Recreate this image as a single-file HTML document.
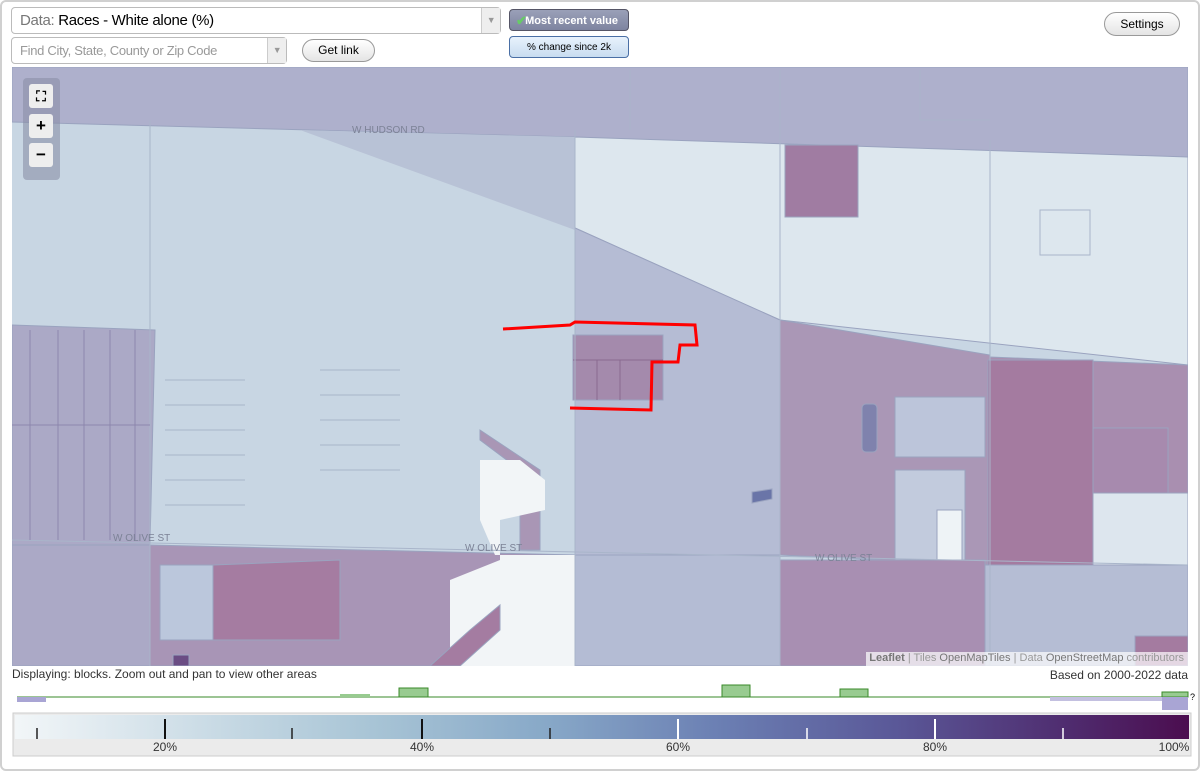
<!DOCTYPE html>
<html><head><style>
body{margin:0;width:1200px;height:771px;background:#fff;font-family:"Liberation Sans",sans-serif;position:relative;overflow:hidden}
.frame{position:absolute;left:0;top:0;width:1196px;height:767px;border:2px solid #d0d0d0;border-radius:6px}
.sel{position:absolute;background:#fff;border:1px solid #bbb;border-radius:4px;box-sizing:border-box}
.arrow{position:absolute;right:0;top:0;bottom:0;width:18px;border-left:1px solid #ccc;background:#eee;color:#999;font-size:9px;text-align:center}
.btn{position:absolute;border:1px solid #999;border-radius:12px;background:linear-gradient(#fff,#e4e4e4);font-size:12px;text-align:center;box-sizing:border-box}
.zb{position:absolute;left:29px;width:24px;height:24px;background:#eee;border-radius:3px;font-weight:bold;text-align:center;font-size:17px;line-height:24px}
</style></head><body>
<div class="frame"></div>
<div class="sel" style="left:11px;top:7px;width:490px;height:27px;font-size:15px;line-height:25px;padding-left:8px;letter-spacing:-0.3px"><span style="color:#777">Data:</span> Races - White alone (%)<div class="arrow" style="line-height:25px">▼</div></div>
<div class="sel" style="left:11px;top:37px;width:276px;height:27px;font-size:13px;line-height:25px;padding-left:8px;color:#999;letter-spacing:-0.3px">Find City, State, County or Zip Code<div class="arrow" style="line-height:25px">▼</div></div>
<div class="btn" style="left:302px;top:39px;width:73px;height:23px;line-height:21px">Get link</div>
<div style="position:absolute;left:509px;top:9px;width:120px;height:22px;border:1px solid #556;border-radius:4px;background:linear-gradient(#9aa0b8,#7e84a0);color:#fff;font-size:11px;font-weight:bold;line-height:22px;text-align:right;padding-right:10px;box-sizing:border-box"><span style="color:#6c6;position:absolute;left:6px;font-size:13px">✔</span>Most recent value</div>
<div style="position:absolute;left:509px;top:36px;width:120px;height:22px;border:1px solid #4a6fa5;border-radius:4px;background:linear-gradient(#e8f2fc,#c8dcf0);font-size:10px;line-height:22px;text-align:center;box-sizing:border-box">% change since 2k</div>
<div class="btn" style="left:1104px;top:12px;width:76px;height:24px;line-height:22px">Settings</div>

<svg style="position:absolute;left:0;top:0" width="1200" height="771">
<defs><clipPath id="m"><rect x="12" y="67" width="1176" height="599"/></clipPath>
<linearGradient id="g" x1="0" x2="1"><stop offset="0" stop-color="#f2f6f8"/><stop offset=".3" stop-color="#a9c5d6"/><stop offset=".45" stop-color="#88a9c8"/><stop offset=".6" stop-color="#6b7fb3"/><stop offset=".75" stop-color="#5a5898"/><stop offset=".9" stop-color="#4f2b6e"/><stop offset="1" stop-color="#4b0d4f"/></linearGradient></defs>
<g clip-path="url(#m)" stroke="#9aa3bf" stroke-width="1">
<rect x="12" y="67" width="1176" height="599" fill="#c8d6e3" stroke="none"/>
<polygon points="12,67 1188,67 1188,158 990,155 575,137 12,122" fill="#aeb0cc"/>
<polygon points="300,130 575,137 575,230" fill="#b8c2d6" stroke="none"/>
<polygon points="575,137 1188,157 1188,365 780,320 575,228" fill="#dde7ee"/>
<polygon points="575,228 780,320 780,555 575,555" fill="#b5bcd4"/>
<polygon points="780,320 990,355 990,565 780,555" fill="#aa97b6"/>
<polygon points="990,357 1188,365 1188,565 990,565" fill="#a98fb0"/>
<rect x="988" y="360" width="105" height="205" fill="#a47ba0"/>
<rect x="1093" y="428" width="75" height="65" fill="#a78aae"/>
<rect x="1093" y="493" width="95" height="72" fill="#dde6ee"/>
<rect x="895" y="397" width="90" height="60" fill="#bcc5da"/>
<rect x="895" y="470" width="70" height="90" fill="#c2cbdd"/>
<rect x="937" y="510" width="25" height="50" fill="#eef3f6"/>
<rect x="862" y="404" width="15" height="48" rx="4" fill="#7f82ad"/>
<path d="M752,492 l20,-3 v10 l-20,4z" fill="#6a75a8"/>
<rect x="785" y="145" width="73" height="72" fill="#a07ca2"/>
<polygon points="12,325 155,330 150,545 12,545" fill="#aba9c6"/>
<polygon points="12,545 150,545 150,666 12,666" fill="#aba9c6"/>
<polygon points="150,545 575,555 575,666 150,666" fill="#a895b6"/>
<polygon points="213,565 340,560 340,640 213,640" fill="#a57ca1"/>
<rect x="160" y="565" width="53" height="75" fill="#bbc7dc"/>
<polygon points="480,430 540,470 540,550 520,550 520,470 480,440" fill="#a996b5"/>
<polygon points="480,460 520,460 545,480 545,510 500,520 500,560 450,580 450,666 575,666 575,555 495,555 480,520" fill="#f2f5f7" stroke="none"/>
<polygon points="470,630 500,605 500,630 460,666 430,666" fill="#a47ca1"/>
<rect x="575" y="555" width="205" height="111" fill="#b4bcd4"/>
<rect x="780" y="560" width="205" height="106" fill="#a88fb2"/>
<rect x="985" y="565" width="203" height="101" fill="#b5bdd4"/>
<rect x="1135" y="636" width="53" height="30" fill="#a47ba0"/>
<rect x="573" y="335" width="90" height="65" fill="#a48aac"/>
<path d="M573,360 H663 M597,360 V400 M620,360 V400" stroke="#8a6a90" fill="none"/>
<rect x="173" y="655" width="16" height="11" fill="#6b4d84"/>
<g fill="none" stroke="#a9b5ca">
<path d="M150,120 V666 M575,130 V666 M780,70 V666 M990,140 V666 M12,540 L1188,565"/>
<path d="M165,380 H245 M165,405 H245 M165,430 H245 M165,455 H245 M165,480 H245 M165,505 H245 M320,370 H400 M320,395 H400 M320,420 H400 M320,445 H400 M320,470 H400"/>
<path d="M1040,210 H1090 V255 H1040Z M920,70 V120 H990 M630,70 V130"/>
</g>
<path d="M30,330 V540 M58,330 V540 M84,330 V540 M110,330 V540 M135,330 V540 M12,425 H150" stroke="#8d86ad" fill="none"/>
<path d="M503,329 L570,325 L575,322 L695,325 L697,345 L680,345 L678,362 L652,362 L651,410 L570,408" fill="none" stroke="#f00" stroke-width="3"/>
<rect x="23" y="78" width="37" height="102" rx="4" fill="#8a90a6" opacity=".6" stroke="none"/>
</g>
<g font-size="10" fill="#7c8296" font-family="Liberation Sans">
<text x="352" y="133">W HUDSON RD</text><text x="465" y="551">W OLIVE ST</text><text x="815" y="561">W OLIVE ST</text><text x="113" y="541">W OLIVE ST</text>
</g>
<path d="M17,697 H1162" stroke="#3a8a2a" stroke-width="1"/>
<rect x="17" y="697" width="29" height="5" fill="#a9a5d4"/>
<rect x="399" y="688" width="29" height="9" fill="#98cb90" stroke="#3a8a2a"/>
<rect x="722" y="685" width="28" height="12" fill="#98cb90" stroke="#3a8a2a"/>
<rect x="840" y="689" width="28" height="8" fill="#98cb90" stroke="#3a8a2a"/>
<rect x="340" y="694" width="30" height="3" fill="#98cb90"/>
<rect x="1162" y="692" width="26" height="5" fill="#98cb90" stroke="#3a8a2a"/>
<rect x="1162" y="697" width="26" height="13" fill="#a9a5d4"/>
<rect x="1050" y="697" width="112" height="4" fill="#c3c0e0"/>
<text x="1190" y="700" font-size="9">?</text>
<rect x="13" y="713" width="1178" height="43" fill="#ebebeb" stroke="#ccc"/>
<rect x="15" y="715" width="1174" height="24" fill="url(#g)"/>
<g stroke-width="1.5"><path d="M37,728 V739 M292,728 V739 M550,728 V739" stroke="#222"/><path d="M165,719 V739 M422,719 V739" stroke="#111" stroke-width="2"/><path d="M678,719 V739 M935,719 V739" stroke="#fff" stroke-width="2"/><path d="M807,728 V739 M1063,728 V739" stroke="#fff"/></g>
<g font-size="12" fill="#333" text-anchor="middle"><text x="165" y="751">20%</text><text x="422" y="751">40%</text><text x="678" y="751">60%</text><text x="935" y="751">80%</text><text x="1174" y="751">100%</text></g>
</svg>
<div class="zb" style="top:84px;font-size:14px">⛶</div>
<div class="zb" style="top:114px">+</div>
<div class="zb" style="top:143px">−</div>
<div style="position:absolute;left:866px;top:652px;width:322px;height:14px;background:rgba(255,255,255,.7);font-size:11px;color:#999;text-align:right;padding-right:4px;box-sizing:border-box"><b style="color:#777">Leaflet</b> | Tiles <span style="color:#777">OpenMapTiles</span> | Data <span style="color:#777">OpenStreetMap</span> contributors</div>
<div style="position:absolute;left:12px;top:667px;font-size:12px;color:#333">Displaying: blocks. Zoom out and pan to view other areas</div>
<div style="position:absolute;right:12px;top:668px;font-size:12px;color:#333">Based on 2000-2022 data</div>
</body></html>
